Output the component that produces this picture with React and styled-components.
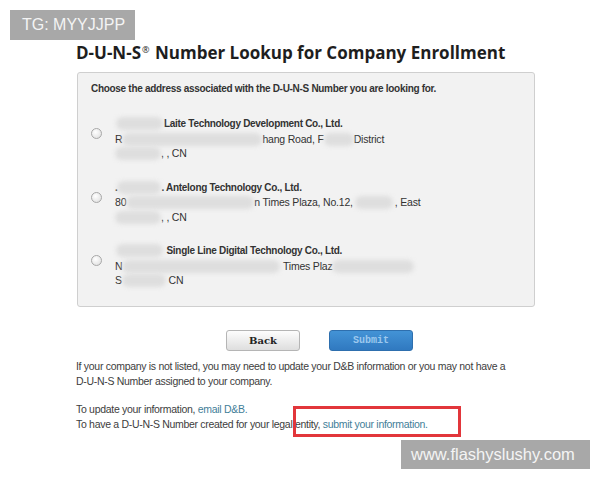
import React from "react";
import styled, { createGlobalStyle } from "styled-components";

const GlobalStyle = createGlobalStyle`
  html, body {
    margin: 0;
    padding: 0;
    background: #ffffff;
  }
  body {
    width: 600px;
    height: 480px;
    overflow: hidden;
    font-family: "Liberation Sans", Arial, sans-serif;
  }
`;

const Page = styled.div`
  position: relative;
  width: 600px;
  height: 480px;
  box-sizing: border-box;
  padding: 38px 0 0 76px;
`;

const Title = styled.h1`
  margin: 0 0 7px 0;
  font-family: "Open Sans", "DejaVu Sans", sans-serif;
  font-weight: 700;
  font-size: 17px;
  line-height: 24px;
  color: #1e1e1e;

  sup {
    font-size: 9px;
    font-weight: 400;
    vertical-align: 6px;
    margin: 0 1px;
  }
`;

const Panel = styled.div`
  width: 458px;
  height: 235px;
  box-sizing: border-box;
  margin-left: 1px;
  padding: 9px 13px 0 13px;
  background: #f2f2f2;
  border: 1px solid #cfcfcf;
  border-radius: 3px;
`;

const Instruction = styled.div`
  font-size: 10px;
  font-weight: 700;
  line-height: 14px;
  letter-spacing: -0.3px;
  color: #333;
`;

const EntryList = styled.div`
  display: flex;
  flex-direction: column;
  gap: 20px;
  margin-top: 21px;
`;

const Entry = styled.div`
  display: flex;
  align-items: flex-start;
  gap: 13px;
`;

const Radio = styled.span`
  flex: none;
  width: 9px;
  height: 9px;
  margin-top: 11px;
  border-radius: 50%;
  border: 1px solid #a8a8a8;
  background: radial-gradient(circle at 40% 35%, #ffffff 0%, #e6e6e6 70%, #d4d4d4 100%);
`;

const Lines = styled.div`
  display: flex;
  flex-direction: column;
  font-size: 10.5px;
  line-height: 14.5px;
  letter-spacing: -0.2px;
  color: #333;
`;

const Line = styled.div`
  white-space: nowrap;
  font-weight: ${(p) => (p.$bold ? 700 : 400)};
  font-size: ${(p) => (p.$bold ? "10px" : "inherit")};
  letter-spacing: ${(p) => (p.$bold ? "-0.3px" : "inherit")};
`;

const Blur = styled.span`
  display: inline-block;
  width: ${(p) => p.$w}px;
  height: 13px;
  vertical-align: -3px;
  margin: 0 ${(p) => p.$m || 0}px;
  border-radius: 7px;
  background: #dedede;
  filter: blur(2px);
`;

const ButtonRow = styled.div`
  display: flex;
  gap: 29px;
  margin: 23px 0 0 150px;
`;

const BackButton = styled.button`
  width: 74px;
  height: 21px;
  padding: 0;
  border: 1px solid #b5b5b5;
  border-radius: 3px;
  background: linear-gradient(#fdfdfd, #dedede);
  font-family: "DejaVu Serif", "Liberation Serif", serif;
  font-weight: 700;
  font-size: 10px;
  color: #222;
`;

const SubmitButton = styled.button`
  width: 84px;
  height: 21px;
  padding: 0;
  border: 1px solid #2e6fae;
  border-radius: 3px;
  background: linear-gradient(#4393d6, #3079c0);
  font-family: "Liberation Mono", "DejaVu Sans Mono", monospace;
  font-weight: 700;
  font-size: 10px;
  color: #9cc8ee;
`;

const Note = styled.p`
  margin: ${(p) => p.$top}px 0 0 0;
  font-size: 10.5px;
  line-height: 14.5px;
  letter-spacing: -0.3px;
  color: #3d3d3d;
  width: 434px;
`;

const Link = styled.a`
  color: #3f7e98;
  text-decoration: none;
`;

const Watermark = styled.div`
  position: absolute;
  left: ${(p) => p.$x}px;
  top: ${(p) => p.$y}px;
  width: ${(p) => p.$w}px;
  height: ${(p) => p.$h}px;
  box-sizing: border-box;
  padding-left: ${(p) => p.$pad}px;
  display: flex;
  align-items: center;
  background: #a8a8a8;
  color: #f4f4f4;
  font-family: "Liberation Sans", Arial, sans-serif;
  font-size: ${(p) => p.$size}px;
  white-space: nowrap;
`;

const Highlight = styled.div`
  position: absolute;
  left: 293px;
  top: 406px;
  width: 168px;
  height: 31px;
  box-sizing: border-box;
  border: 3px solid #e2363b;
`;

const entries = [
  {
    name: [<Blur key="b" $w={47} $m={1} />, "Laite Technology Development Co., Ltd."],
    address: ["R", <Blur key="a" $w={140} />, "hang Road, F", <Blur key="c" $w={30} />, "District"],
    city: [<Blur key="d" $w={46} />, ", , CN"],
  },
  {
    name: [".", <Blur key="b" $w={44} />, ". Antelong Technology Co., Ltd."],
    address: ["80", <Blur key="a" $w={128} />, "n Times Plaza, No.12,", <Blur key="c" $w={38} $m={2} />, ", East"],
    city: [<Blur key="d" $w={46} />, ", , CN"],
  },
  {
    name: [<Blur key="b" $w={47} $m={1} />, " Single Line Digital Technology Co., Ltd."],
    address: ["N", <Blur key="a" $w={158} />, " Times Plaz", <Blur key="c" $w={82} />],
    city: ["S", <Blur key="d" $w={44} />, " CN"],
  },
];

export default function App() {
  return (
    <>
      <GlobalStyle />
      <Page>
        <Title>
          D-U-N-S<sup>®</sup> Number Lookup for Company Enrollment
        </Title>
        <Panel>
          <Instruction>
            Choose the address associated with the D-U-N-S Number you are looking for.
          </Instruction>
          <EntryList>
            {entries.map((e, i) => (
              <Entry key={i}>
                <Radio />
                <Lines>
                  <Line $bold>{e.name}</Line>
                  <Line>{e.address}</Line>
                  <Line>{e.city}</Line>
                </Lines>
              </Entry>
            ))}
          </EntryList>
        </Panel>
        <ButtonRow>
          <BackButton>Back</BackButton>
          <SubmitButton>Submit</SubmitButton>
        </ButtonRow>
        <Note $top={8}>
          If your company is not listed, you may need to update your D&amp;B information or you may not have a
          D-U-N-S Number assigned to your company.
        </Note>
        <Note $top={14}>
          To update your information, <Link>email D&amp;B.</Link>
          <br />
          To have a D-U-N-S Number created for your legal entity, <Link>submit your information.</Link>
        </Note>
        <Highlight />
        <Watermark $x={10} $y={10} $w={125} $h={30} $pad={12} $size={16}>
          TG: MYYJJPP
        </Watermark>
        <Watermark $x={401} $y={440} $w={189} $h={29} $pad={10} $size={16.5}>
          www.flashyslushy.com
        </Watermark>
      </Page>
    </>
  );
}
